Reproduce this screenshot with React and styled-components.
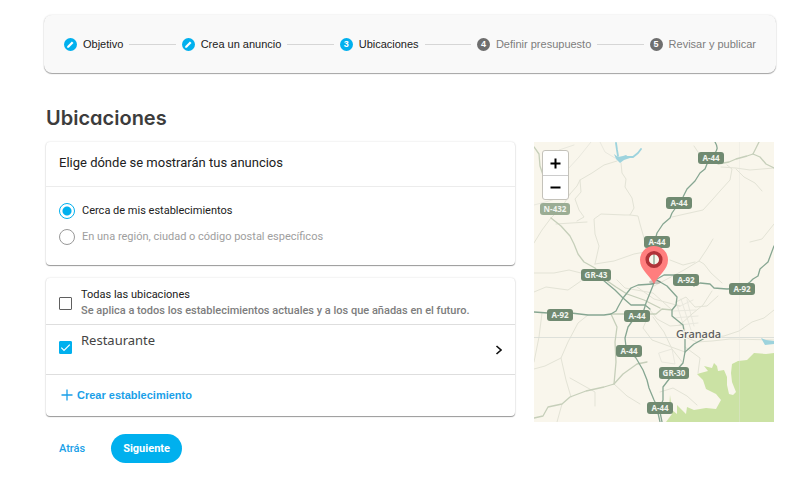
import { Fragment, useState } from 'react';
import styled, { createGlobalStyle, css, ThemeProvider } from 'styled-components';

const theme = {
    primary: '#00b0ee',
    link: '#1a9fe8',
    text: '#212121',
    muted: '#7d7d7d',
    disabled: '#9e9e9e',
    divider: '#dedede',
    font: "Roboto, 'Liberation Sans', sans-serif",
};

const GlobalStyle = createGlobalStyle`
    * {
        box-sizing: border-box;
    }

    body {
        margin: 0;
        background: #fff;
        color: ${theme.text};
        font-family: ${theme.font};
        font-size: 11px;
        line-height: 16px;
    }

    button, input {
        font: inherit;
        margin: 0;
    }
`;

const Page = styled.div`
    padding: 15px 11px 24px 44px;
`;

const Stepper = styled.ol`
    display: flex;
    align-items: center;
    height: 58px;
    margin: 0;
    padding: 0 20px;
    list-style: none;
    background: #f9f9f9;
    border-radius: 8px;
    box-shadow: 0 1px 1px rgba(0, 0, 0, 0.34), 0 0 2px rgba(0, 0, 0, 0.14);
`;

const Step = styled.li`
    display: flex;
    align-items: center;
    gap: 6px;
    white-space: nowrap;
    font-family: 'Liberation Sans', Arial, sans-serif;
    color: ${({ $reached, theme }) => ($reached ? theme.text : theme.muted)};
`;

const StepBadge = styled.span`
    display: flex;
    align-items: center;
    justify-content: center;
    width: 13px;
    height: 13px;
    border-radius: 50%;
    color: #fff;
    font-size: 9px;
    font-weight: 700;
    line-height: 13px;
    background: ${({ $reached, theme }) => ($reached ? theme.primary : '#6e6e6e')};
`;

const StepLine = styled.li`
    flex: 1;
    height: 1px;
    margin: 0 6px;
    background: #d6d6d6;
`;

const Content = styled.main`
    padding: 0 2px;
`;

const Title = styled.h1`
    margin: 32px 0 11px;
    color: #3c3c3c;
    font-family: Inter, Lato, sans-serif;
    font-feature-settings: 'cv11';
    font-size: 20px;
    font-weight: 600;
    line-height: 26px;
`;

const Columns = styled.div`
    display: grid;
    grid-template-columns: minmax(0, 1fr) 240px;
    align-items: start;
    gap: 19px;
`;

const Cards = styled.div`
    display: flex;
    flex-direction: column;
    gap: 13px;
`;

const Card = styled.section`
    background: #fff;
    border-radius: 4px;
    box-shadow: 0 1px 1px rgba(0, 0, 0, 0.38), 0 0 2px rgba(0, 0, 0, 0.16);
`;

const CardTitle = styled.h2`
    margin: 0;
    padding: 11px 13px 13px;
    border-bottom: 1px solid #ececec;
    font-size: 13px;
    font-weight: 400;
    line-height: 20px;
`;

const Options = styled.div`
    display: flex;
    flex-direction: column;
    gap: 10px;
    padding: 16px 13px 20px;
`;

const Option = styled.label`
    display: flex;
    align-items: center;
    gap: 7px;
    color: ${({ $dimmed, theme }) => ($dimmed ? theme.disabled : theme.text)};
`;

const Radio = styled.input`
    appearance: none;
    width: 16px;
    height: 16px;
    border: 1px solid #999;
    border-radius: 50%;

    &:checked {
        border-color: ${({ theme }) => theme.primary};
        background: radial-gradient(circle, ${({ theme }) => theme.primary} 4px, transparent 5px);
    }
`;

const Row = styled.div`
    display: flex;
    align-items: center;
    gap: 9px;
    min-height: 47px;
    padding: 4px 13px 0;
    border-bottom: 1px solid ${({ theme }) => theme.divider};
`;

const PlaceRow = styled(Row)`
    min-height: 50px;
    padding: 0 13px 4px;
`;

const CheckWrap = styled.span`
    display: grid;
    flex: none;

    > * {
        grid-area: 1 / 1;
    }

    svg {
        pointer-events: none;
    }
`;

const CheckInput = styled.input`
    appearance: none;
    width: 13px;
    height: 13px;
    border: 1px solid #5f5f5f;
    border-radius: 1px;
    background: #fff;

    &:checked {
        border-color: ${({ theme }) => theme.primary};
        background: ${({ theme }) => theme.primary};
    }
`;

const RowLabel = styled.label`
    flex: 1;
    line-height: 16px;
`;

const PlaceLabel = styled.label`
    flex: 1;
    align-self: flex-start;
    padding-top: 7px;
    color: #444;
    font-family: 'Noto Sans', sans-serif;
    font-size: 13px;
`;

const Hint = styled.span`
    display: block;
    color: ${({ theme }) => theme.muted};
    font-weight: 500;
`;

const plain = css`
    padding: 0;
    border: 0;
    background: none;
    cursor: pointer;
`;

const IconButton = styled.button`
    ${plain};
    align-self: stretch;
    display: flex;
    align-items: center;
    padding-top: 4px;
    color: #111;
`;

const CreateButton = styled.button`
    ${plain};
    display: flex;
    align-items: center;
    gap: 4px;
    height: 41px;
    margin-left: 15px;
    padding-bottom: 1px;
    color: ${({ theme }) => theme.link};
    font-family: 'Liberation Sans', Arial, sans-serif;
    font-weight: 700;
`;

const Actions = styled.footer`
    display: flex;
    align-items: center;
    gap: 26px;
    padding: 5px 13px 0;
`;

const BackLink = styled.a`
    color: ${({ theme }) => theme.link};
    font-weight: 500;
    text-decoration: none;
`;

const NextButton = styled.button`
    ${plain};
    height: 29px;
    padding: 0 12px;
    border-radius: 15px;
    background: ${({ theme }) => theme.primary};
    color: #fff;
    font-weight: 700;
`;

const MapFrame = styled.div`
    position: relative;
    height: 280px;
    overflow: hidden;
    background: #f9f6ec;

    > svg {
        display: block;
    }
`;

const ZoomControl = styled.div`
    position: absolute;
    top: 8px;
    left: 8px;
    display: flex;
    flex-direction: column;
    width: 27px;
    border: 1px solid #c4c2ba;
    border-radius: 3px;
    background: #fff;
`;

const ZoomButton = styled.button`
    ${plain};
    display: grid;
    place-items: center;
    height: 24px;
    color: #000;

    & + & {
        border-top: 1px solid #ccc;
    }
`;

const PencilIcon = () => (
    <svg width="13" height="13" viewBox="0 0 13 13" aria-hidden="true">
        <path d="M3.2 9.8V8.2L7.9 3.5l1.6 1.6-4.7 4.7z" fill="#fff" />
    </svg>
);

const Checkbox = (props) => (
    <CheckWrap>
        <CheckInput type="checkbox" {...props} />
        {props.checked && (
            <svg width="13" height="13" viewBox="0 0 13 13" fill="none" aria-hidden="true">
                <path d="M2.3 6.7 5 9.4l5.8-5.8" stroke="#fff" strokeWidth="1.2" />
            </svg>
        )}
    </CheckWrap>
);

const motorways = [
    'M181 0C184 5 184 8 180 12L173 22 171 27 166 31 161 39 153 47 149 55 145 61 138 71 136 76 129 82 123 91 120 102V141L116 151 112 161 109 171 99 178 94 185 91 196 92 205 102 216 109 228 113 238 115 246 120 258 126 270 128 280',
    'M0 170L14 171 37 171 54 173 70 173 77 172 82 169 84 165 89 156 97 146 104 143 119 142',
    'M69 138L81 148 89 156 97 163 111 163 116 167',
    'M121 137L133 144 143 155 142 163 138 168V174L149 183 151 195V210L149 221 139 232 129 245V258L124 271 126 280',
    'M151 210L160 202 171 196',
    'M123 137L130 133 140 133 153 137 160 144 166 141 176 142 180 146 193 147 208 146 216 140 219 137 224 134 226 127 234 120 240 104',
];

const mainRoads = [
    'M17 76L27 84 36 94 40 102 44 112 50 120 61 126 69 136 82 145 93 152 110 158 126 166',
    'M77 172L83 185 81 200 82 220 80 242',
    'M0 276L9 274 14 265 28 262 36 255 52 249 70 245 80 242 89 232 103 222 113 220',
    'M184 22L195 20 202 17 213 14 219 12 226 15 232 22 240 26',
    'M219 12L222 6 225 0',
    'M77 172L95 172 122 172 128 167 138 168',
    'M0 5L5 12 6 24 9 33',
];

const minorRoads = [
    'M17 76L28 65 36 52 43 44 46 38 58 31 70 23 83 19',
    'M87 21L88 31 92 37 91 45 98 56 100 66 96 73 91 73 67 72 60 77 61 92 65 104 61 122',
    'M96 73L104 74 106 82 110 96 112 110',
    'M17 76L8 88 0 101',
    'M22 82L53 80',
    'M46 38L47 50 41 57 45 68 50 75 43 79',
    'M61 122L80 119 100 112 111 110',
    'M0 131L20 131 35 128 47 131',
    'M0 150L12 145 34 148 47 139',
    'M8 171L5 195 0 220',
    'M54 173L44 181 34 200 27 216 32 238 37 255',
    'M27 216L11 224 0 227',
    'M28 262L23 280',
    'M80 242L93 254 106 262',
    'M36 236L61 250 61 264',
    'M120 144L150 128 165 119 170 122 177 131 188 141',
    'M165 119L173 107 179 97',
    'M138 75L151 72 169 68 179 57 186 49 196 38 198 27 193 23',
    'M160 4L166 13 174 14',
    'M187 25L202 26 216 28 240 26',
    'M202 27L210 35 221 41 228 49',
    'M240 168L230 176 218 180 205 189 190 194 171 196',
    'M151 195L163 200 178 199 196 197 240 198',
    'M142 160L152 155 161 165 173 164 184 154',
    'M146 183L158 172 169 163 178 149',
    'M151 205L166 216 164 231',
    'M126 250L139 246 153 254 163 263',
    'M113 164L123 177 136 184 149 183',
    'M116 170L109 186 118 198 151 210',
    'M119 175L130 190 138 207 149 221',
    'M103 145L120 157 146 164',
    'M83 138L91 146 119 151 138 168',
    'M216 100L228 97 240 82',
    'M136 118L149 123 161 120',
];

const cityStreets = [
    'M142 160L151 188M147 157L157 188M153 158L160 184M139 169L162 168M139 176L164 174M144 165L159 158M145 183L164 181',
    'M125 211L138 207 141 222 128 220Z',
    'M21 31 34 27 45 15 57 0M0 63L15 59 36 52M18 17L25 8 40 3M66 0L71 10 81 16',
];

const signs = [
    { x: 164, y: 10, name: 'A-44' },
    { x: 132, y: 55, name: 'A-44' },
    { x: 6, y: 61, name: 'N-432', pale: true },
    { x: 110, y: 94, name: 'A-44' },
    { x: 47, y: 127, name: 'GR-43' },
    { x: 139, y: 132, name: 'A-92' },
    { x: 195, y: 141, name: 'A-92' },
    { x: 13, y: 167, name: 'A-92' },
    { x: 90, y: 168, name: 'A-44' },
    { x: 82, y: 203, name: 'A-44' },
    { x: 125, y: 225, name: 'GR-30' },
    { x: 113, y: 260, name: 'A-44' },
];

const RoadSign = ({ x, y, name, pale }) => {
    const width = name.length > 4 ? 30 : 26;
    return (
        <g>
            <rect x={x} y={y} width={width} height="12" rx="3" fill={pale ? '#9bad94' : '#708a71'} />
            <text
                x={x + width / 2}
                y={y + 9}
                textAnchor="middle"
                fill="#f1f4ee"
                fontFamily="'Noto Sans', sans-serif"
                fontSize="8"
                fontWeight="700"
            >
                {name}
            </text>
        </g>
    );
};

const MapDrawing = () => (
    <svg width="240" height="280" viewBox="0 0 240 280" role="img" aria-label="Mapa de Granada">
        <path
            d="M240 211L232 212 220 211 213 218 204 219 198 222 197 231 198 240 202 250 199 253 195 252 193 243 193 235 190 228 184 229 183 224 180 221 178 226 170 224 174 229 163 232 169 238 172 247 182 252 187 258 182 267 172 266 160 268 153 265 152 272 143 263 143 272 138 268 136 253 135 267 138 272 132 280H240Z"
            fill="#cbe2a4"
        />
        <g fill="none" strokeLinejoin="round" strokeLinecap="round">
            <g stroke="#e9e8de">
                {cityStreets.map((d) => <path key={d} d={d} />)}
            </g>
            <g stroke="#e3e3d6">
                {minorRoads.map((d) => <path key={d} d={d} />)}
            </g>
            <path d="M0 195.5H240" stroke="#d5dad5" strokeWidth=".8" />
            <path d="M205.5 0V280" stroke="#e6e6df" strokeWidth=".4" />
            <g stroke="#c6cfba" strokeWidth="1.3">
                {mainRoads.map((d) => <path key={d} d={d} />)}
            </g>
            <g stroke="#86a692" strokeWidth="1.3">
                {motorways.map((d) => <path key={d} d={d} />)}
            </g>
            <path d="M82 1L83 8 84 14M93 15L99 15 104 11 107 7" stroke="#9dd3dd" strokeWidth="1.8" />
        </g>
        <path d="M80 12L84 15 89 14 92 13 96 16 90 18 86 21 82 17Z" fill="#9dd3dd" />
        <path d="M227 196L232 198 240 199V202L231 203Z" fill="#9dd3dd" />
        <text
            x="142"
            y="196"
            fill="#5c5c5c"
            fontFamily="'Noto Sans', sans-serif"
            fontSize="11"
            fontWeight="500"
            stroke="#f9f6ec"
            strokeWidth="2"
            paintOrder="stroke"
        >
            Granada
        </text>
        {signs.map((sign) => <RoadSign key={`${sign.x}-${sign.y}`} {...sign} />)}
        <ellipse cx="121" cy="140" rx="6" ry="2" fill="#000" opacity=".2" />
        <path
            d="M120 104a14 14 0 0 0-14 14c0 10 9 14 14 24 5-10 14-14 14-24a14 14 0 0 0-14-14zm0 8a6 6 0 1 1 0 12 6 6 0 0 1 0-12z"
            fill="#ff7e7e"
            fillRule="evenodd"
        />
        <circle cx="120" cy="117.5" r="6.8" fill="none" stroke="#b03238" strokeWidth="3.5" />
    </svg>
);

const steps = ['Objetivo', 'Crea un anuncio', 'Ubicaciones', 'Definir presupuesto', 'Revisar y publicar'];
const currentStep = 2;

const App = () => {
    const [area, setArea] = useState('near');
    const [all, setAll] = useState(false);
    const [place, setPlace] = useState(true);

    return (
        <ThemeProvider theme={theme}>
            <GlobalStyle />
            <Page>
                <Stepper>
                    {steps.map((name, index) => (
                        <Fragment key={name}>
                            {index > 0 && <StepLine aria-hidden="true" />}
                            <Step $reached={index <= currentStep}>
                                <StepBadge $reached={index <= currentStep}>
                                    {index < currentStep ? <PencilIcon /> : index + 1}
                                </StepBadge>
                                {name}
                            </Step>
                        </Fragment>
                    ))}
                </Stepper>
                <Content>
                    <Title>Ubicaciones</Title>
                    <Columns>
                        <Cards>
                            <Card>
                                <CardTitle>Elige dónde se mostrarán tus anuncios</CardTitle>
                                <Options>
                                    <Option>
                                        <Radio
                                            type="radio"
                                            name="area"
                                            checked={area === 'near'}
                                            onChange={() => setArea('near')}
                                        />
                                        Cerca de mis establecimientos
                                    </Option>
                                    <Option $dimmed>
                                        <Radio
                                            type="radio"
                                            name="area"
                                            checked={area === 'region'}
                                            onChange={() => setArea('region')}
                                        />
                                        En una región, ciudad o código postal específicos
                                    </Option>
                                </Options>
                            </Card>
                            <Card>
                                <Row>
                                    <Checkbox id="all" checked={all} onChange={() => setAll(!all)} />
                                    <RowLabel htmlFor="all">
                                        Todas las ubicaciones
                                        <Hint>Se aplica a todos los establecimientos actuales y a los que añadas en el futuro.</Hint>
                                    </RowLabel>
                                </Row>
                                <PlaceRow>
                                    <Checkbox id="place" checked={place} onChange={() => setPlace(!place)} />
                                    <PlaceLabel htmlFor="place">Restaurante</PlaceLabel>
                                    <IconButton type="button" aria-label="Ver establecimiento">
                                        <svg width="7" height="10" viewBox="0 0 7 10" fill="none">
                                            <path d="M1.5 1l4.5 4-4.5 4" stroke="currentColor" strokeWidth="1.6" />
                                        </svg>
                                    </IconButton>
                                </PlaceRow>
                                <CreateButton type="button">
                                    <svg width="12" height="12" viewBox="0 0 12 12" fill="none" aria-hidden="true">
                                        <path d="M6 .5v11M.5 6h11" stroke="currentColor" strokeWidth="1.3" />
                                    </svg>
                                    Crear establecimiento
                                </CreateButton>
                            </Card>
                            <Actions>
                                <BackLink href="#atras">Atrás</BackLink>
                                <NextButton type="button">Siguiente</NextButton>
                            </Actions>
                        </Cards>
                        <MapFrame>
                            <MapDrawing />
                            <ZoomControl>
                                <ZoomButton type="button" aria-label="Acercar">
                                    <svg width="11" height="11" viewBox="0 0 11 11">
                                        <path d="M5.5.5v10M.5 5.5h10" stroke="#000" strokeWidth="2" />
                                    </svg>
                                </ZoomButton>
                                <ZoomButton type="button" aria-label="Alejar">
                                    <svg width="11" height="11" viewBox="0 0 11 11">
                                        <path d="M.5 5.5h10" stroke="#000" strokeWidth="2" />
                                    </svg>
                                </ZoomButton>
                            </ZoomControl>
                        </MapFrame>
                    </Columns>
                </Content>
            </Page>
        </ThemeProvider>
    );
};

export default App;
